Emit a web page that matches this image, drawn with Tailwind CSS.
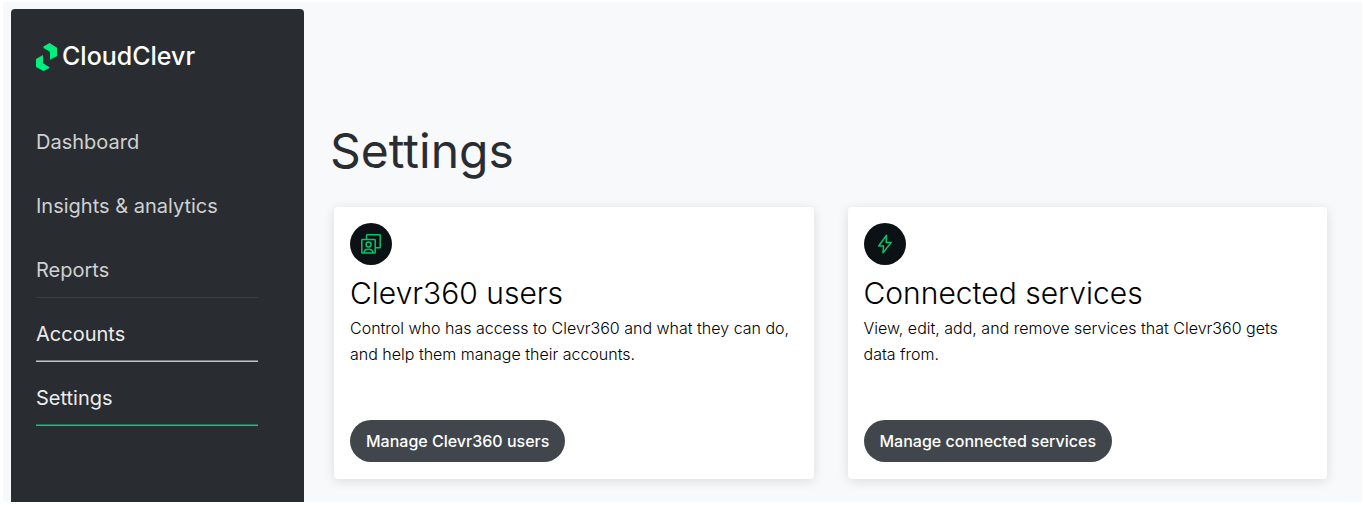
<!DOCTYPE html>
<html lang="en">
<head>
<meta charset="utf-8">
<meta name="viewport" content="width=device-width, initial-scale=1">
<title>CloudClevr – Settings</title>
<script src="https://cdn.jsdelivr.net/npm/@tailwindcss/browser@4"></script>
</head>
<body class="flex min-h-screen bg-white pt-0.5 pr-px pb-[3px] pl-[3px] font-['Inter',sans-serif]">
<div class="flex flex-1 bg-[#f8f9fb] pt-[7px] pl-2">
  <aside class="w-[293px] shrink-0 rounded-t bg-[#292d31] px-[25px] pt-8">
    <a href="#" class="flex items-end gap-[5px] text-[25px] leading-[30px] font-medium text-white">
      <svg class="h-[29px] w-[21px]" viewBox="0 0 21 29" fill="#00f080" aria-hidden="true">
        <path d="M7.500 4.500 L13.500 1 L21 5.800 V14 L14 17.800 V9.800 L7.500 6Z"/>
        <path d="M0 17 L7 13 V21.300 L13.500 25.300 V26 L7.500 29 L0 25Z"/>
      </svg>
      <span>CloudClevr</span>
    </a>
    <nav class="mt-[39px] flex w-[222px] flex-col text-[20px] text-[#cfd1d3]" aria-label="Main">
      <a href="#" class="flex h-16 items-center">Dashboard</a>
      <a href="#" class="flex h-16 items-center">Insights &amp; analytics</a>
      <a href="#" class="flex h-[60px] items-center border-b border-b-[#3a3d42] pt-1">Reports</a>
      <a href="#" class="flex h-16 items-center border-b border-b-[#c5c6c8] pt-2 text-[#ececec] shadow-[inset_0_-1px_0_#77797c]">Accounts</a>
      <a href="#" class="flex h-16 items-center border-b border-b-[#06cf71] pt-2 text-[#ececec] shadow-[inset_0_-1px_0_#167a50]" aria-current="page">Settings</a>
    </nav>
  </aside>
  <main class="flex-1 pt-[112px] pr-[35px] pl-[30px]">
    <h1 class="-ml-1 text-[48px] leading-[60px] font-normal text-[#292d31]">Settings</h1>
    <div class="mt-[26px] grid grid-cols-2 gap-[34px] text-black">
      <section class="flex h-[272px] flex-col items-start rounded bg-white px-4 pt-4 pb-[17px] shadow-[0_2px_12px_rgba(0,0,0,0.12)]">
        <span class="flex size-[42px] items-center justify-center rounded-full bg-[#0c1115]">
          <svg class="size-5" viewBox="0 0 20 20" fill="none" stroke="#05c46b" stroke-width="1.500" stroke-linejoin="round" aria-hidden="true">
            <path d="M5.500 5.500 V1.300 Q5.500 .8 6 .8 H18.600 Q19.200 .8 19.200 1.300 V13.200 Q19.200 13.800 18.600 13.800 H14.300"/>
            <rect x=".8" y="5.600" width="13.400" height="13.500" rx=".7"/>
            <circle cx="7.500" cy="10.500" r="2.500"/>
            <path d="M3 19 C3 16.500 4.500 15.200 7.500 15.200 S12 16.500 12 19"/>
          </svg>
        </span>
        <h2 class="mt-2.5 text-[30px] leading-9 font-light">Clevr360 users</h2>
        <p class="mt-1 text-[16px] leading-[26px] font-light">Control who has access to Clevr360 and what they can do, and help them manage their accounts.</p>
        <button type="button" class="mt-auto h-[42px] rounded-full bg-[#41464c] px-4 text-[16px] font-medium text-white">Manage Clevr360 users</button>
      </section>
      <section class="flex h-[272px] flex-col items-start rounded bg-white px-4 pt-4 pb-[17px] shadow-[0_2px_12px_rgba(0,0,0,0.12)]">
        <span class="flex size-[42px] items-center justify-center rounded-full bg-[#0c1115]">
          <svg class="size-5" viewBox="0 0 20 20" fill="none" stroke="#05c46b" stroke-width="1.500" stroke-linejoin="round" aria-hidden="true">
            <path d="M11.500 1.200 L3.700 12 H8.500 L8 18.800 L16.300 8.400 H11.200Z"/>
          </svg>
        </span>
        <h2 class="mt-2.5 text-[30px] leading-9 font-light">Connected services</h2>
        <p class="mt-1 text-[16px] leading-[26px] font-light">View, edit, add, and remove services that Clevr360 gets data from.</p>
        <button type="button" class="mt-auto h-[42px] rounded-full bg-[#41464c] px-4 text-[16px] font-medium text-white">Manage connected services</button>
      </section>
    </div>
  </main>
</div>
</body>
</html>
